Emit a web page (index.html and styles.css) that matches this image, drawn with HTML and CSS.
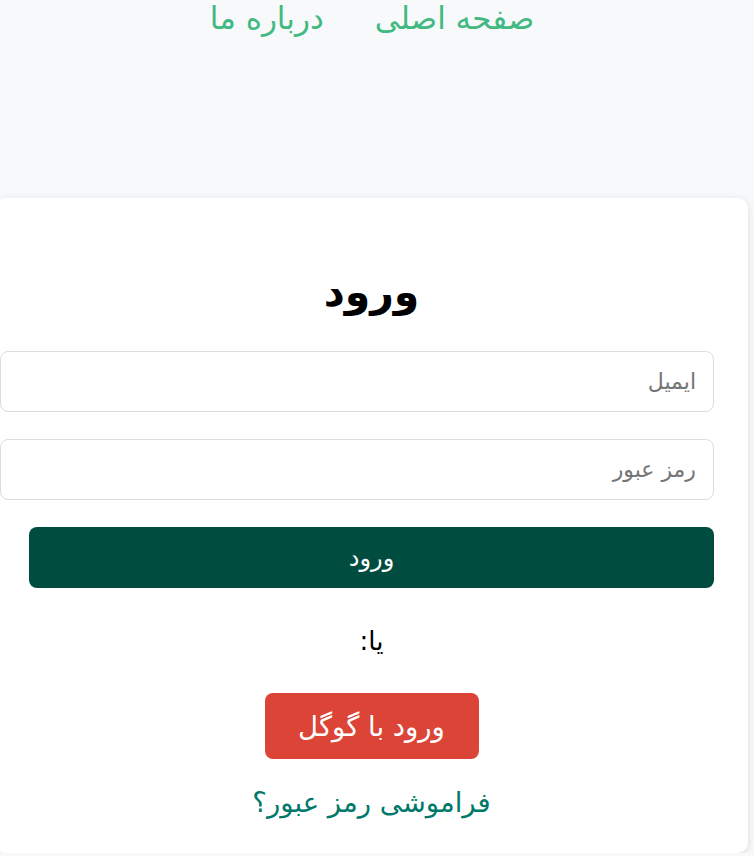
FILE: index.html
```html
<!DOCTYPE html>
<html lang="fa" dir="rtl">
<head>
<meta charset="utf-8">
<title>ورود</title>
<link rel="stylesheet" href="styles.css">
</head>
<body>
<nav class="nav">
  <a class="nav-link" href="#">صفحه اصلی</a>
  <a class="nav-link" href="#">درباره ما</a>
</nav>
<main class="card">
  <h2 class="title">ورود</h2>
  <form class="form">
    <input class="field" type="email" placeholder="ایمیل">
    <input class="field" type="password" placeholder="رمز عبور">
    <button class="submit" type="button">ورود</button>
  </form>
  <p class="or">یا:</p>
  <button class="google" type="button">ورود با گوگل</button>
  <a class="forgot" href="#">فراموشی رمز عبور؟</a>
</main>
</body>
</html>
```
FILE: styles.css
```css
html, body {
  overflow-x: hidden;
}
body {
  margin: 0;
  background: #f8f9fa;
  font-family: "DejaVu Sans", sans-serif;
  direction: rtl;
  color: #000;
}
.nav {
  display: flex;
  justify-content: center;
  gap: 51px;
  padding: 0 10px 0 0;
  height: 198px;
  box-sizing: border-box;
}
.nav-link {
  color: #42b983;
  text-decoration: none;
  font-size: 31px;
}
.card {
  width: 685px;
  margin-right: 6px;
  padding: 70px 34px 35px;
  background: #fff;
  border-radius: 10px;
  box-shadow: 0 2px 8px rgba(0, 0, 0, 0.12);
  display: flex;
  flex-direction: column;
  align-items: center;
}
.title {
  margin: 0 0 35px;
  font-size: 41px;
  font-weight: bold;
}
.form {
  width: 100%;
  display: flex;
  flex-direction: column;
  gap: 27px;
}
.field {
  box-sizing: border-box;
  width: calc(100% + 29px);
  height: 61px;
  padding: 0 17px;
  border: 1px solid #ddd;
  border-radius: 8px;
  font-family: inherit;
  font-size: 22px;
  direction: rtl;
}
.field::placeholder {
  color: #757575;
}
.submit {
  height: 61px;
  border: 0;
  border-radius: 8px;
  background: #004d40;
  color: #fff;
  font-family: inherit;
  font-size: 24px;
}
.or {
  margin: 38px 0 37px;
  font-size: 26px;
}
.google {
  width: 214px;
  height: 66px;
  border: 0;
  border-radius: 8px;
  background: #db4437;
  color: #fff;
  font-family: inherit;
  font-size: 27.5px;
}
.forgot {
  margin-top: 27px;
  color: #00796b;
  text-decoration: none;
  font-size: 27.5px;
}
```
